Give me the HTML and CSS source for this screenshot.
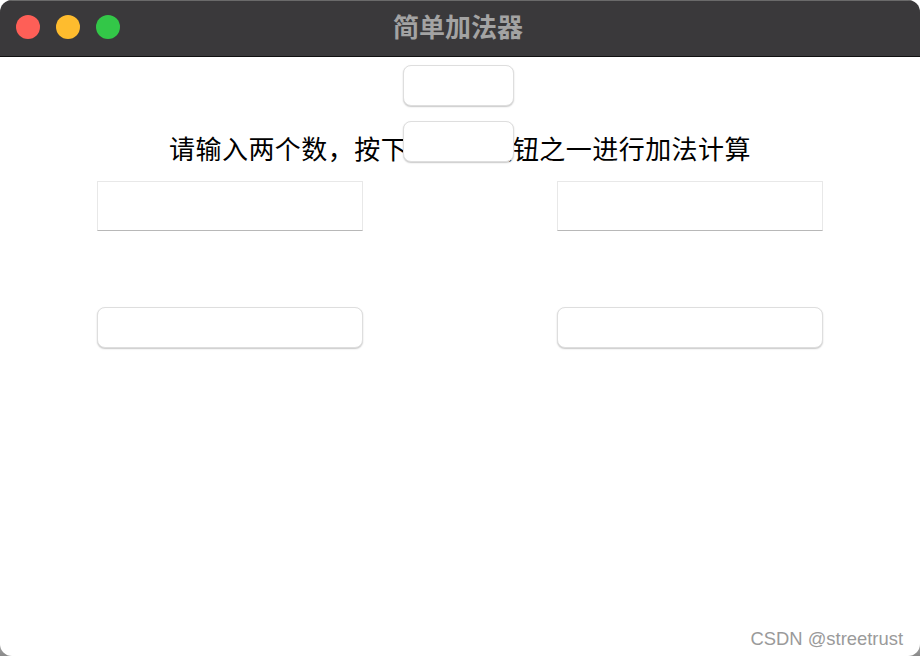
FILE: index.html
```html
<!DOCTYPE html>
<html lang="zh-CN">
<head>
<meta charset="utf-8">
<title>简单加法器</title>
<link rel="stylesheet" href="styles.css">
</head>
<body>
<div class="window">
  <div class="titlebar">
    <div class="lights">
      <span class="light red"></span>
      <span class="light yellow"></span>
      <span class="light green"></span>
    </div>
    <div class="title">简单加法器</div>
  </div>
  <div class="content">
    <div class="top-btn-row"><button class="btn small"></button></div>
    <div class="label-row">
      <div class="label">请输入两个数，按下下面的按钮之一进行加法计算</div>
      <button class="btn small overlay"></button>
    </div>
    <div class="pair inputs">
      <input class="field" type="text">
      <input class="field" type="text">
    </div>
    <div class="pair buttons">
      <button class="btn wide"></button>
      <button class="btn wide"></button>
    </div>
  </div>
  <div class="footer">CSDN @streetrust</div>
</div>
</body>
</html>
```

FILE: styles.css
```css
html {
  background: linear-gradient(to bottom, #ffffff 0, #ffffff 600px, #8a8a8a 656px);
}
body {
  margin: 0;
  width: 920px;
  height: 656px;
  font-family: "Noto Sans CJK SC", "Noto Sans", sans-serif;
}
.window {
  width: 920px;
  height: 656px;
  box-sizing: border-box;
  background: #ffffff;
  border-radius: 12px;
  overflow: hidden;
  display: flex;
  flex-direction: column;
}
.titlebar {
  height: 57px;
  box-sizing: border-box;
  background: #3a393b;
  border-top: 1px solid #6a6a6a;
  border-bottom: 1px solid #111111;
  display: flex;
  align-items: center;
  position: relative;
}
.lights {
  display: flex;
  gap: 16px;
  padding-left: 16px;
  margin-top: -3px;
}
.light {
  width: 24px;
  height: 24px;
  border-radius: 50%;
  display: block;
}
.red { background: #fe5f57; }
.yellow { background: #febc2e; }
.green { background: #33c748; }
.title {
  position: absolute;
  left: 0;
  right: 0;
  top: 8px;
  text-align: center;
  font-size: 26px;
  line-height: 34px;
  font-weight: bold;
  color: #a3a3a3;
  padding-right: 4px;
}
.content {
  flex: 1;
  display: flex;
  flex-direction: column;
}
.btn {
  background: #ffffff;
  border: 1px solid #dedede;
  border-radius: 8px;
  box-shadow: 0 1px 1.5px rgba(0, 0, 0, 0.22);
  padding: 0;
  box-sizing: border-box;
  height: 41px;
}
.small {
  width: 111px;
}
.top-btn-row {
  padding-top: 8px;
  padding-left: 403px;
  height: 41px;
}
.label-row {
  position: relative;
  margin-top: 15px;
  padding-top: 12px;
}
.label {
  text-align: center;
  font-size: 26px;
  letter-spacing: 0.45px;
  line-height: 30px;
  color: #000000;
}
.overlay {
  position: absolute;
  top: 0;
  left: 403px;
}
.pair {
  display: flex;
  justify-content: space-between;
  padding: 0 97px;
}
.inputs {
  margin-top: 18px;
}
.field {
  width: 266px;
  height: 50px;
  box-sizing: border-box;
  border: 1px solid #e8e8e8;
  border-bottom: 1px solid #b8b8b8;
  border-radius: 0;
  background: #ffffff;
  margin: 0;
  padding: 0;
  outline: none;
}
.buttons {
  margin-top: 76px;
}
.wide {
  width: 266px;
}
.footer {
  text-align: right;
  padding: 0 17px 7px 0;
  font-family: "Liberation Sans", Arial, sans-serif;
  font-size: 18.4px;
  line-height: 20px;
  color: #9a9a9a;
}
```
